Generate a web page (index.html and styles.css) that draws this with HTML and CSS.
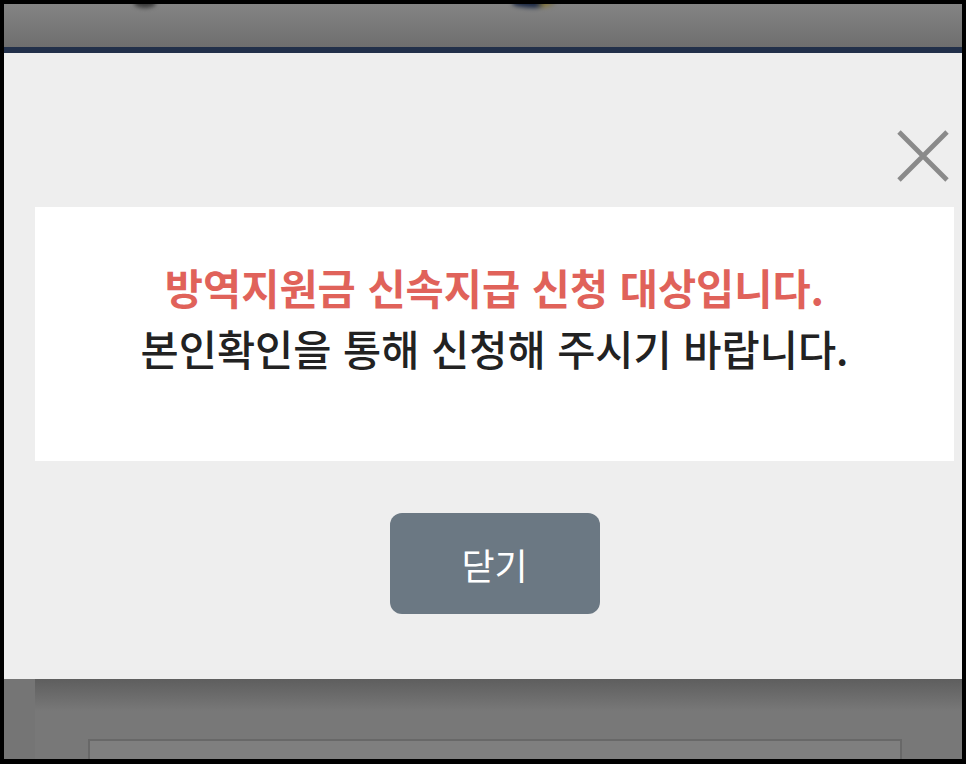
FILE: index.html
```html
<!DOCTYPE html>
<html lang="ko">
<head>
    <meta charset="UTF-8">
    <meta name="viewport" content="width=device-width, initial-scale=1.0">
    <title>방역지원금 신속지급</title>
    <link rel="stylesheet" href="styles.css">
</head>
<body>
    <div class="screen">
        <div class="page-top">
            <span class="blob blob-dark"></span>
            <span class="blob blob-logo"></span>
        </div>
        <div class="page-bar"></div>
        <div class="modal">
            <div class="close-row">
                <button class="close-btn" type="button" aria-label="닫기">
                    <svg width="52" height="52" viewBox="0 0 52 52">
                        <path d="M2 2 L50 50 M50 2 L2 50" stroke="#8a8a8a" stroke-width="4.8" fill="none"/>
                    </svg>
                </button>
            </div>
            <div class="message">
                <p class="msg-red">방역지원금 신속지급 신청 대상입니다.</p>
                <p class="msg-dark">본인확인을 통해 신청해 주시기 바랍니다.</p>
            </div>
            <div class="actions">
                <button class="btn-close" type="button">닫기</button>
            </div>
        </div>
        <div class="page-bottom">
            <div class="page-card"></div>
        </div>
    </div>
</body>
</html>
```

FILE: styles.css
```css
html, body {
    margin: 0;
    background: #000;
}
body {
    font-family: "Noto Sans CJK KR", "Noto Sans", sans-serif;
    padding: 4px 4px 5px 4px;
    height: 764px;
    box-sizing: border-box;
}
.screen {
    height: 755px;
    display: flex;
    flex-direction: column;
    overflow: hidden;
}
.screen > div {
    flex-shrink: 0;
}
.page-top {
    position: relative;
    height: 43px;
    background: linear-gradient(#848484, #6e6e6e);
}
.blob {
    position: absolute;
    top: -6px;
    height: 10px;
    border-radius: 50%;
    filter: blur(2px);
}
.blob-dark {
    left: 130px;
    width: 22px;
    background: #3a3a3a;
}
.blob-logo {
    left: 508px;
    width: 44px;
    background: linear-gradient(90deg, #1d2a45 0 55%, #8a7a3a 75%, #6e6e6e);
}
.page-bar {
    height: 6px;
    background: #22304a;
}
.modal {
    height: 626px;
    background: #eeeeee;
    padding: 77px 8px 0 31px;
    box-sizing: border-box;
}
.close-row {
    display: flex;
    justify-content: flex-end;
    height: 52px;
    padding-right: 5px;
}
.close-btn {
    border: none;
    background: none;
    padding: 0;
    width: 52px;
    height: 52px;
    cursor: pointer;
}
.message {
    margin-top: 25px;
    height: 254px;
    background: #fff;
    padding-top: 50px;
    box-sizing: border-box;
    text-align: center;
}
.message p {
    margin: 0;
    line-height: 61px;
    font-size: 41.5px;
}
.msg-red {
    color: #e0625a;
    font-weight: 700;
}
.msg-dark {
    color: #222;
    font-weight: 500;
}
.actions {
    display: flex;
    justify-content: center;
    margin-top: 52px;
}
.btn-close {
    width: 210px;
    height: 101px;
    border: none;
    border-radius: 12px;
    background: #6b7883;
    color: #fff;
    font-family: inherit;
    font-size: 36px;
    cursor: pointer;
}
.page-bottom {
    flex: 1 1 auto !important;
    min-height: 0;
    overflow: hidden;
    background: linear-gradient(#5e5e5e, #787878 40%);
    border-left: 31px solid #757575;
    padding: 60px 60px 0 53px;
}
.page-card {
    height: 40px;
    border: 2px solid #686868;
    background: #7f7f7f;
}
```
